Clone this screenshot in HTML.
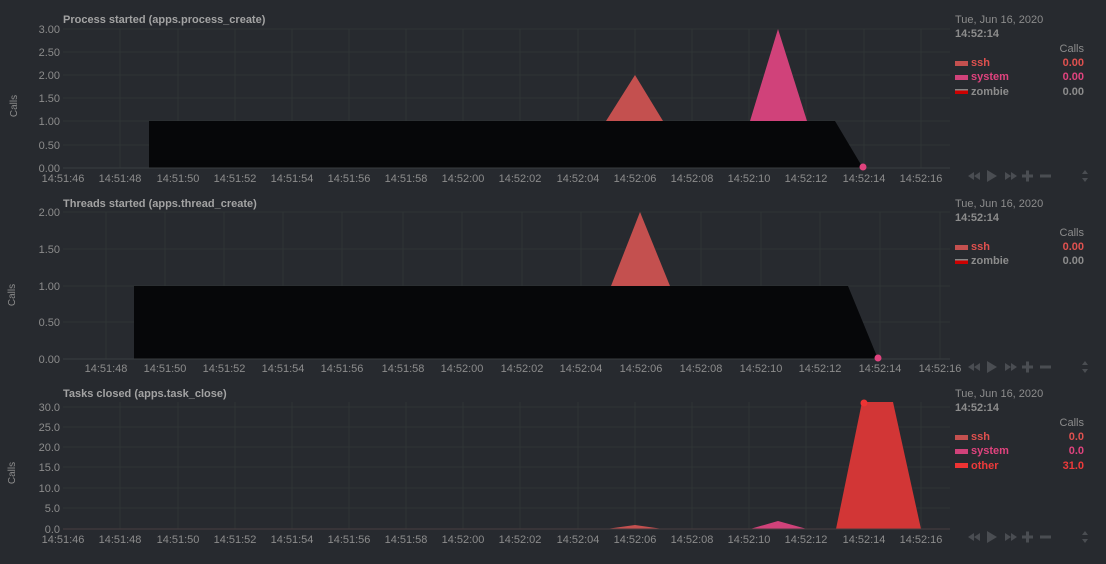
<!DOCTYPE html><html><head><style>
body{margin:0;background:#272a2f;width:1106px;height:564px;overflow:hidden;font-family:"Liberation Sans",sans-serif}
svg{position:absolute;left:0;top:0}
</style></head><body>
<svg width="1106" height="564" font-family="Liberation Sans, sans-serif" font-size="11">
<defs>
<g id="ctl" fill="#4a4d52">
<path d="M968 176l6-4v8zM974 176l6-4v8z"/><path d="M987 170l10 6-10 6z"/><path d="M1005 172l6 4-6 4zM1011 172l6 4-6 4z"/>
<rect x="1022" y="174.5" width="11" height="3"/><rect x="1026" y="170.5" width="3" height="11"/><rect x="1040" y="174.5" width="11" height="3"/>
<path d="M1082 174l3-4 3 4zM1082 178l3 4 3-4z"/>
</g>
</defs>
<!-- Chart 1 -->
<text x="63" y="23" fill="#a3a3a3" font-weight="bold">Process started (apps.process_create)</text>
<g stroke="#2f3436" stroke-width="1">
<path d="M63 29H950M63 52H950M63 75H950M63 98H950M63 121H950M63 145H950"/>
<path d="M120 29V168M178 29V168M235 29V168M292 29V168M349 29V168M406 29V168M463 29V168M520 29V168M578 29V168M635 29V168M692 29V168M749 29V168M806 29V168M864 29V168M921 29V168"/>
</g>
<path d="M606 121L635 75L663 121z" fill="#c4504f"/>
<path d="M750 121L778 29L807 121z" fill="#d0427a"/>
<path d="M149 168V121H835L863 168z" fill="#060709"/>
<line x1="63" y1="168" x2="950" y2="168" stroke="#3a3d40"/>
<circle cx="863" cy="167" r="3.5" fill="#e0437e"/>
<g fill="#8c8c8c" text-anchor="end"><text x="60" y="33">3.00</text><text x="60" y="56">2.50</text><text x="60" y="79">2.00</text><text x="60" y="102">1.50</text><text x="60" y="125">1.00</text><text x="60" y="149">0.50</text><text x="60" y="172">0.00</text></g>
<g fill="#8c8c8c" text-anchor="middle"><text x="63" y="182">14:51:46</text><text x="120" y="182">14:51:48</text><text x="178" y="182">14:51:50</text><text x="235" y="182">14:51:52</text><text x="292" y="182">14:51:54</text><text x="349" y="182">14:51:56</text><text x="406" y="182">14:51:58</text><text x="463" y="182">14:52:00</text><text x="520" y="182">14:52:02</text><text x="578" y="182">14:52:04</text><text x="635" y="182">14:52:06</text><text x="692" y="182">14:52:08</text><text x="749" y="182">14:52:10</text><text x="806" y="182">14:52:12</text><text x="864" y="182">14:52:14</text><text x="921" y="182">14:52:16</text></g>
<text transform="translate(17 106) rotate(-90)" fill="#8c8c8c" font-size="10" text-anchor="middle">Calls</text>
<text x="955" y="23" fill="#8c8c8c">Tue, Jun 16, 2020</text><text x="955" y="37" fill="#8c8c8c" font-weight="bold">14:52:14</text>
<text x="1084" y="52" fill="#8c8c8c" text-anchor="end">Calls</text>
<rect x="955" y="61" width="13" height="5" fill="#c4504f"/><text x="971" y="66" fill="#e0514f" font-weight="bold">ssh</text><text x="1084" y="66" fill="#e0514f" font-weight="bold" text-anchor="end">0.00</text>
<rect x="955" y="75" width="13" height="5" fill="#d0427a"/><text x="971" y="80" fill="#e0437e" font-weight="bold">system</text><text x="1084" y="80" fill="#e0437e" font-weight="bold" text-anchor="end">0.00</text>
<rect x="955" y="89" width="13" height="5" fill="#cc0000"/><rect x="955" y="89" width="13" height="1.5" fill="#888"/><text x="971" y="95" fill="#8c8c8c" font-weight="bold">zombie</text><text x="1084" y="95" fill="#8c8c8c" font-weight="bold" text-anchor="end">0.00</text>
<use href="#ctl"/>
<!-- Chart 2 -->
<text x="63" y="207" fill="#a3a3a3" font-weight="bold">Threads started (apps.thread_create)</text>
<g stroke="#2f3436" stroke-width="1">
<path d="M63 212H950M63 249H950M63 286H950M63 322H950"/>
<path d="M106 212V359M165 212V359M224 212V359M283 212V359M342 212V359M403 212V359M462 212V359M522 212V359M581 212V359M641 212V359M701 212V359M761 212V359M820 212V359M880 212V359M940 212V359"/>
</g>
<path d="M611 286L640 212L670 286z" fill="#c4504f"/>
<path d="M134 359V286H848L878 359z" fill="#060709"/>
<line x1="63" y1="359" x2="950" y2="359" stroke="#3a3d40"/>
<circle cx="878" cy="358" r="3.5" fill="#e0437e"/>
<g fill="#8c8c8c" text-anchor="end"><text x="60" y="216">2.00</text><text x="60" y="253">1.50</text><text x="60" y="290">1.00</text><text x="60" y="326">0.50</text><text x="60" y="363">0.00</text></g>
<g fill="#8c8c8c" text-anchor="middle"><text x="106" y="372">14:51:48</text><text x="165" y="372">14:51:50</text><text x="224" y="372">14:51:52</text><text x="283" y="372">14:51:54</text><text x="342" y="372">14:51:56</text><text x="403" y="372">14:51:58</text><text x="462" y="372">14:52:00</text><text x="522" y="372">14:52:02</text><text x="581" y="372">14:52:04</text><text x="641" y="372">14:52:06</text><text x="701" y="372">14:52:08</text><text x="761" y="372">14:52:10</text><text x="820" y="372">14:52:12</text><text x="880" y="372">14:52:14</text><text x="940" y="372">14:52:16</text></g>
<text transform="translate(15 295) rotate(-90)" fill="#8c8c8c" font-size="10" text-anchor="middle">Calls</text>
<text x="955" y="207" fill="#8c8c8c">Tue, Jun 16, 2020</text><text x="955" y="221" fill="#8c8c8c" font-weight="bold">14:52:14</text>
<text x="1084" y="236" fill="#8c8c8c" text-anchor="end">Calls</text>
<rect x="955" y="245" width="13" height="5" fill="#c4504f"/><text x="971" y="250" fill="#e0514f" font-weight="bold">ssh</text><text x="1084" y="250" fill="#e0514f" font-weight="bold" text-anchor="end">0.00</text>
<rect x="955" y="259" width="13" height="5" fill="#cc0000"/><rect x="955" y="259" width="13" height="1.5" fill="#888"/><text x="971" y="264" fill="#8c8c8c" font-weight="bold">zombie</text><text x="1084" y="264" fill="#8c8c8c" font-weight="bold" text-anchor="end">0.00</text>
<use href="#ctl" y="191"/>
<!-- Chart 3 -->
<text x="63" y="397" fill="#a3a3a3" font-weight="bold">Tasks closed (apps.task_close)</text>
<g stroke="#2f3436" stroke-width="1">
<path d="M63 407H950M63 427H950M63 447H950M63 467H950M63 488H950M63 508H950"/>
<path d="M120 402V529M178 402V529M235 402V529M292 402V529M349 402V529M406 402V529M463 402V529M520 402V529M578 402V529M635 402V529M692 402V529M749 402V529M806 402V529M864 402V529M921 402V529"/>
</g>
<path d="M606 529L635 525L663 529z" fill="#c4504f"/>
<path d="M750 529L778 521L807 529z" fill="#d0427a"/>
<path d="M836 529L862 402H893L921 529z" fill="#d23636"/>
<line x1="63" y1="529" x2="950" y2="529" stroke="#4a3d40"/>
<circle cx="864" cy="403" r="3.5" fill="#ee3333"/>
<g fill="#8c8c8c" text-anchor="end"><text x="60" y="411">30.0</text><text x="60" y="431">25.0</text><text x="60" y="451">20.0</text><text x="60" y="471">15.0</text><text x="60" y="492">10.0</text><text x="60" y="512">5.0</text><text x="60" y="533">0.0</text></g>
<g fill="#8c8c8c" text-anchor="middle"><text x="63" y="543">14:51:46</text><text x="120" y="543">14:51:48</text><text x="178" y="543">14:51:50</text><text x="235" y="543">14:51:52</text><text x="292" y="543">14:51:54</text><text x="349" y="543">14:51:56</text><text x="406" y="543">14:51:58</text><text x="463" y="543">14:52:00</text><text x="520" y="543">14:52:02</text><text x="578" y="543">14:52:04</text><text x="635" y="543">14:52:06</text><text x="692" y="543">14:52:08</text><text x="749" y="543">14:52:10</text><text x="806" y="543">14:52:12</text><text x="864" y="543">14:52:14</text><text x="921" y="543">14:52:16</text></g>
<text transform="translate(15 473) rotate(-90)" fill="#8c8c8c" font-size="10" text-anchor="middle">Calls</text>
<text x="955" y="397" fill="#8c8c8c">Tue, Jun 16, 2020</text><text x="955" y="411" fill="#8c8c8c" font-weight="bold">14:52:14</text>
<text x="1084" y="426" fill="#8c8c8c" text-anchor="end">Calls</text>
<rect x="955" y="435" width="13" height="5" fill="#c4504f"/><text x="971" y="440" fill="#e0514f" font-weight="bold">ssh</text><text x="1084" y="440" fill="#e0514f" font-weight="bold" text-anchor="end">0.0</text>
<rect x="955" y="449" width="13" height="5" fill="#d0427a"/><text x="971" y="454" fill="#e0437e" font-weight="bold">system</text><text x="1084" y="454" fill="#e0437e" font-weight="bold" text-anchor="end">0.0</text>
<rect x="955" y="463" width="13" height="5" fill="#ee3333"/><text x="971" y="469" fill="#ee3a3a" font-weight="bold">other</text><text x="1084" y="469" fill="#ee3a3a" font-weight="bold" text-anchor="end">31.0</text>
<use href="#ctl" y="361"/>
</svg>
</body></html>
